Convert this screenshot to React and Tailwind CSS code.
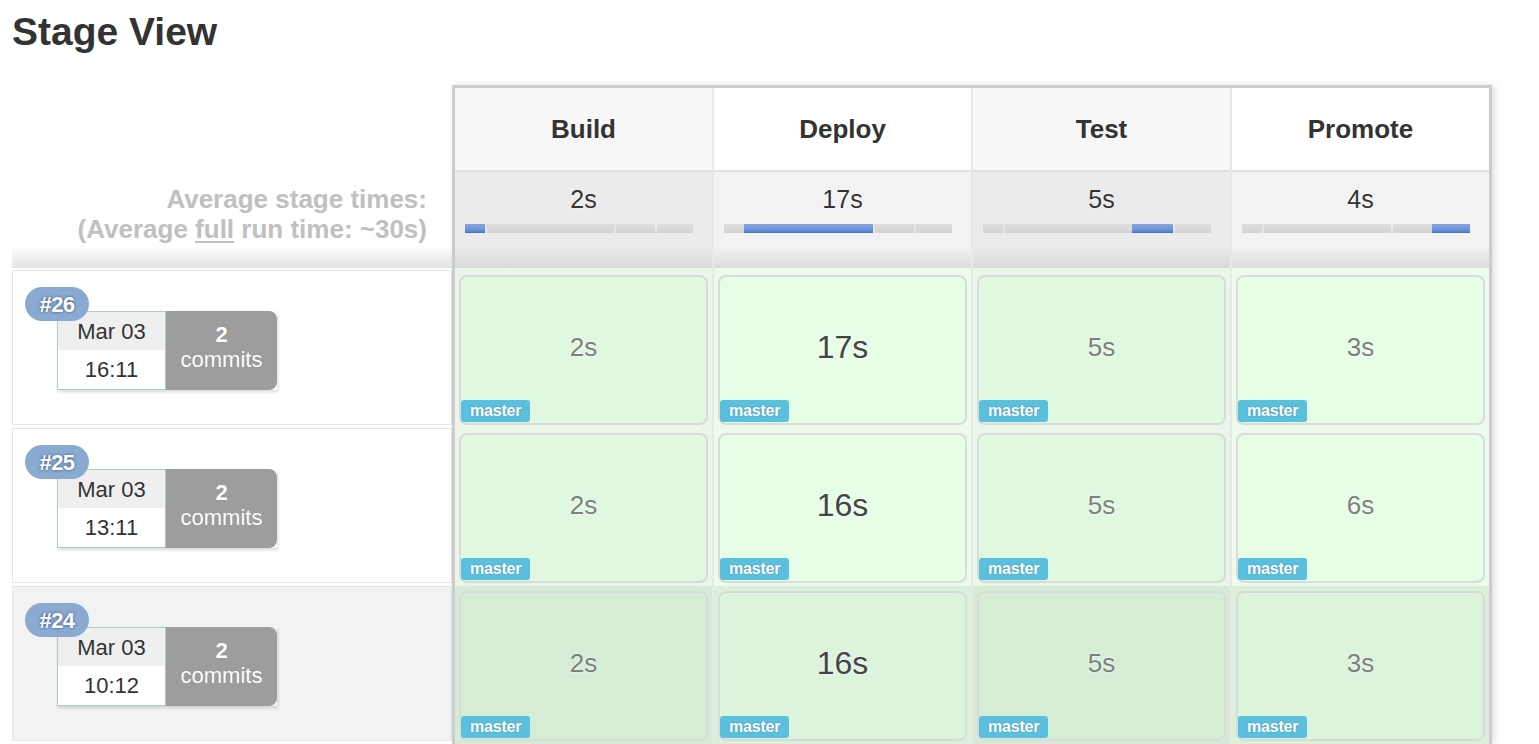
const stages = [
  { name: "Build", avg: "2s", seg: [0, 20] },
  { name: "Deploy", avg: "17s", seg: [20, 150], longest: true },
  { name: "Test", avg: "5s", seg: [150, 192] },
  { name: "Promote", avg: "4s", seg: [192, 230] },
]

const runs = [
  { id: 26, date: "Mar 03", time: "16:11", commits: 2, times: ["2s", "17s", "5s", "3s"] },
  { id: 25, date: "Mar 03", time: "13:11", commits: 2, times: ["2s", "16s", "5s", "6s"] },
  { id: 24, date: "Mar 03", time: "10:12", commits: 2, times: ["2s", "16s", "5s", "3s"], hover: true },
]

const ticks = [0, 20, 150, 192, 230]

function TimeBar({ seg }) {
  return (
    <div className="ml-[10px] mt-[10px] flex h-[9px] w-[228px]">
      {ticks.slice(0, 4).map((start, i) => {
        const end = ticks[i + 1]
        const active = start === seg[0]
        return (
          <div
            key={i}
            className={
              active
                ? "h-full bg-[linear-gradient(to_bottom,#86a6dd,#6b91d6_70%,#3f6cc8)]"
                : "h-full border-l-2 border-[#e6e6e6] bg-[linear-gradient(to_bottom,#dedede,#d3d3d3)] first:border-l-0"
            }
            style={{ width: end - start }}
          />
        )
      })}
    </div>
  )
}

function RunInfo({ run }) {
  return (
    <div className={`mb-[3px] h-[155px] border border-[#e6e6e6] pl-[44px] pt-[40px] ${run.hover ? "bg-[#f2f2f2]" : "bg-white"}`}>
      <div className="relative flex w-fit shadow-[1px_2px_3px_rgba(0,0,0,0.15)]">
        <div className="flex w-[109px] flex-col border border-[#a9d2bd] text-[22px] text-[#333]">
          <div className="flex h-[38px] items-center justify-center bg-[#efefef]">{run.date}</div>
          <div className="flex h-[39px] items-center justify-center bg-white">{run.time}</div>
        </div>
        <div className="flex w-[111px] flex-col items-center justify-center rounded-r-[8px] bg-[#9d9d9d] pb-[8px] text-[22px] leading-[25px] text-white [text-shadow:0_0_1px_rgba(0,0,0,0.2)]">
          <span className="font-bold">{run.commits}</span>
          <span>commits</span>
        </div>
        <div className="absolute -left-[32px] -top-[24px] flex h-[34px] w-[64px] items-center justify-center rounded-full bg-[#8aaad2] text-[22px] font-bold tracking-[-0.5px] text-white [text-shadow:0_0_3px_rgba(40,60,90,0.8)]">
          #{run.id}
        </div>
      </div>
    </div>
  )
}

function StageCell({ time, odd, longest, hover }) {
  const cell = hover ? (odd ? "bg-[#d6ead6]" : "bg-[#dbefdb]") : odd ? "bg-[#e9f6e9]" : "bg-[#edfbed]"
  const card = hover ? (odd ? "bg-[#d5edd5]" : "bg-[#dcf3dc]") : odd ? "bg-[#e0f7e0]" : "bg-[#e6fde6]"
  return (
    <div className={`h-[158px] px-[4px] pb-[3px] pt-[5px] ${cell}`}>
      <div className={`relative h-[150px] rounded-[8px] border-2 border-[#d8dcd8] ${card}`}>
        <div
          className={`flex h-full items-center justify-center pb-[6px] [text-shadow:0_0_3px_#fff] ${
            longest ? "text-[32px] text-[#444]" : "text-[26px] text-[#7a837a]"
          }`}
        >
          {time}
        </div>
        <div className="absolute bottom-[1px] left-0 flex h-[22px] items-center rounded-[3px] bg-[#5bc0de] px-[9px] text-[16px] font-bold tracking-[-0.2px] text-white [text-shadow:0_0_2px_rgba(0,0,0,0.25)]">
          master
        </div>
      </div>
    </div>
  )
}

export default function App() {
  return (
    <div className="min-h-screen bg-white pl-[12px] font-['Liberation_Sans',Arial,sans-serif] text-[#333]">
      <h1 className="mt-[12px] text-[39px] font-bold leading-[39px] text-[#333]">Stage View</h1>

      <div className="mt-[34px] flex">
        {/* left column: labels and run info */}
        <div className="w-[440px] shrink-0">
          <div className="h-[87px]" />
          <div className="h-[96px] bg-[linear-gradient(to_bottom,#fff_78%,#e2e2e2)] pr-[25px] pt-[12px] text-right text-[26px] font-bold leading-[30px] text-[#c0c0c0]">
            <div>Average stage times:</div>
            <div>
              (Average <span className="underline underline-offset-[3px]">full</span> run time: ~30s)
            </div>
          </div>
          <div className="h-[2px]" />
          {runs.map(run => (
            <RunInfo key={run.id} run={run} />
          ))}
        </div>

        {/* stage table */}
        <div className="w-[1040px] shrink-0 border-[3px] border-b-0 border-[#cccccc] bg-[#e8e8e8] shadow-[3px_0_6px_rgba(0,0,0,0.12)]">
          <div className="grid grid-cols-4 gap-x-[2px]">
            {stages.map((stage, i) => {
              const odd = i % 2 === 0
              return (
                <div key={stage.name} className="flex flex-col">
                  <div className={`flex h-[84px] items-center justify-center border-b-2 border-[#e2e2e2] text-[26px] font-bold ${odd ? "bg-[#f7f7f7]" : "bg-white"}`}>
                    {stage.name}
                  </div>
                  <div
                    className={`h-[96px] pt-[12px] ${
                      odd
                        ? "bg-[linear-gradient(to_bottom,#ebebeb_78%,#d9d9d9)]"
                        : "bg-[linear-gradient(to_bottom,#f2f2f2_78%,#dcdcdc)]"
                    }`}
                  >
                    <div className="text-center text-[25px] leading-[30px] text-[#333] [text-shadow:0_0_2px_#fff]">{stage.avg}</div>
                    <TimeBar seg={stage.seg} />
                  </div>
                  <div className={`h-[2px] ${odd ? "bg-[#eaf4ea]" : "bg-[#eef8ee]"}`} />
                  {runs.map(run => (
                    <StageCell key={run.id} time={run.times[i]} odd={odd} longest={stage.longest} hover={run.hover} />
                  ))}
                </div>
              )
            })}
          </div>
        </div>
      </div>
    </div>
  )
}
